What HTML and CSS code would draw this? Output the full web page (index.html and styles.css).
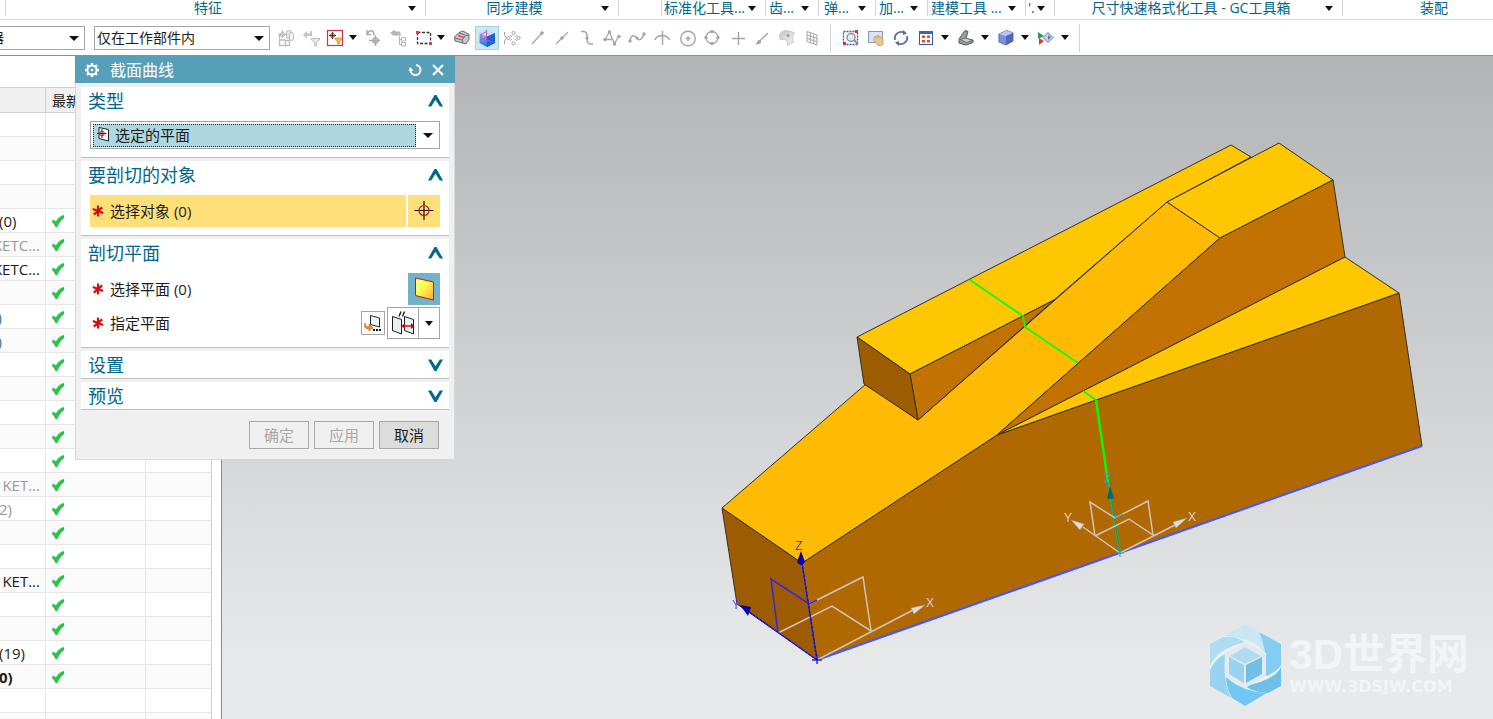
FILE: index.html
```html
<!DOCTYPE html>
<html lang="zh-CN">
<head>
<meta charset="utf-8">
<title>截面曲线</title>
<link rel="stylesheet" href="styles.css">
</head>
<body>
<svg class="defs" aria-hidden="true">
  <defs>
    <symbol id="check" viewBox="0 0 14 14"><path d="M1 7.500 2.800 6.200 5 8.200C6.600 5 9 2.500 12.600 1.400V4C9.600 6 7.600 9 6 12.800H4.800C4 10.500 2.800 9 1 7.500Z" fill="#14d636" stroke="#159a2c" stroke-width=".7"/></symbol>
    <symbol id="star" viewBox="0 0 12 12"><path d="M6 .5V11.500M.8 4 11.200 8M1.800 9.600 10.200 2.400" stroke="#dc0a0a" stroke-width="2.200" fill="none"/></symbol>
    <symbol id="chev" viewBox="0 0 15 12"><path d="M0 11.500 6.500 0H8.500L15 11.500H11.800L7.500 4.800 3.200 11.500Z" fill="#00688b"/></symbol>
    <linearGradient id="gold" x2="1" y2="1"><stop offset="0" stop-color="#ffffa0"/><stop offset=".4" stop-color="#ffff50"/><stop offset="1" stop-color="#ffa63c"/></linearGradient>
    <linearGradient id="blue" x2="0" y2="1"><stop offset="0" stop-color="#a8d4ff"/><stop offset="1" stop-color="#1c6cf0"/></linearGradient>
    <linearGradient id="grey" x2="1" y2="1"><stop offset="0" stop-color="#c4c4c4"/><stop offset="1" stop-color="#f4f4f4"/></linearGradient>
  </defs>
</svg>

<nav class="ribbon">
  <button class="group g-edge"></button>
  <button class="group g-feature"><span>特征</span><i class="arrow"></i></button>
  <button class="group g-sync"><span>同步建模</span><i class="arrow"></i></button>
  <button class="group g-blank"></button>
  <button class="group g-std"><span>标准化工具...</span><i class="arrow"></i></button>
  <button class="group g-gear"><span>齿...</span><i class="arrow"></i></button>
  <button class="group g-spring"><span>弹...</span><i class="arrow"></i></button>
  <button class="group g-add"><span>加...</span><i class="arrow"></i></button>
  <button class="group g-model"><span>建模工具 ...</span><i class="arrow"></i></button>
  <button class="group g-tiny"><span>'.</span><i class="arrow"></i></button>
  <button class="group g-dim"><span>尺寸快速格式化工具 - GC工具箱</span><i class="arrow"></i></button>
  <button class="group g-asm"><span>装配</span></button>
</nav>

<div class="toolbar">
  <div class="pick pick-filter"><select aria-label="选择过滤器"><option>选择过滤器</option></select></div>
  <div class="pick pick-scope"><select aria-label="选择范围"><option>仅在工作部件内</option></select></div>
  <div class="tools">
    <button class="tool" aria-label="装配约束"><svg viewBox="0 0 22 22" fill="none" stroke="#bdbdbd"><path d="M4.500 7.500v11h6v-5M4.500 13h6M10.500 18.500h4v-5h-4M3 7.500h9M7.500 3v8" stroke-width="1.300"/><circle cx="7.500" cy="7.500" r="2.200"/><rect x="11.500" y="3.500" width="5" height="8" rx="2" fill="#e4e4e4"/><rect x="14.500" y="5.500" width="4" height="8" rx="2" fill="#f2f2f2"/></svg></button>
    <button class="tool" aria-label="重置过滤"><svg viewBox="0 0 22 22" fill="#c4c4c4"><path d="M3 8 7 4v2.500h3V4h2v5H7v2.500Z"/><path d="M11.500 11.500h8v1.500l-3 2V19h-2v-4l-3-2Z" stroke="#bbb" fill="#e8e8e8"/></svg></button>
    <span class="split"><button class="tool" aria-label="常规选择过滤器"><svg viewBox="0 0 22 22" fill="none"><rect x="2.500" y="3.500" width="15" height="15" stroke="#cc3344" stroke-width="1.200"/><path d="M4 8.500h7M7.500 5v7" stroke="#333"/><circle cx="7.500" cy="8.500" r="2" stroke="#a33"/><path d="M10 11h6.500v1.500l-2 2V17h-2v-2.500l-2.500-2Z" fill="#f8b83c" stroke="#c98518" stroke-width=".6"/></svg></button><i class="arrow"></i></span>
    <button class="tool" aria-label="恢复点"><svg viewBox="0 0 22 22" fill="none" stroke="#a9a9a9" stroke-width="1.400"><path d="M4 7C7 2 11 3 11 8M4 3V7.500H8M6 13.500h11M12.500 8v11"/><circle cx="12.500" cy="13.500" r="2.500"/></svg></button>
    <button class="tool" aria-label="恢复树"><svg viewBox="0 0 22 22" fill="#b5b5b5"><path d="M2 6 6 3l2 1.500h4l1 4H5Z"/><path d="M11.500 9v8.500M11.500 12.500h2M11.500 17.500h2M13.500 10.500h4v3.500h-4zM13.500 15.500h4v3.500h-4z" fill="none" stroke="#b5b5b5"/></svg></button>
    <span class="split"><button class="tool" aria-label="矩形选择"><svg viewBox="0 0 22 22" fill="none"><rect x="4.500" y="5.500" width="13" height="11" stroke="#333" stroke-width="1.300" stroke-dasharray="3 1.500"/><path d="M3 4h3v3H3zM16 15h3v3h-3z" fill="#e03c3c"/></svg></button><i class="arrow"></i></span>
    <button class="tool" aria-label="高亮面"><svg viewBox="0 0 22 22"><path d="M3.500 10 8 5.500 12 4l6 3.500v5l-3 4.500-3-1-8-2Z" fill="#c6cace" stroke="#666a70"/><path d="M4 11l7 2 4-5 3 .5M11 13l1 3.500M8 6l6 2" fill="none" stroke="#666a70"/><path d="M7 8.500l6 2" stroke="#e44" stroke-width="1.400"/></svg></button>
    <button class="tool on" aria-label="着色"><svg viewBox="0 0 22 22"><path d="M3.500 6 11 2.500 19 6v10l-8 4-7.500-4Z" fill="url(#blue)"/><path d="M3.500 6l7.500 3.500L19 6l-8-3.500Z" fill="#c4e2ff"/><path d="M11 9.500 19 6v10l-8 4Z" fill="#1f62d4"/><path d="M10.500 3v10l6 2M10.500 4.500 5 7.500v5l5.500-2" fill="none" stroke="#d8489a" stroke-width=".9"/></svg></button>
    <button class="tool" aria-label="捕捉点"><svg viewBox="0 0 22 22" fill="none" stroke="#a5a5a5"><path d="M3.500 5v3M3.500 14v3M3.500 8l2 3-2 3"/><circle cx="7.500" cy="11" r="1.600"/><circle cx="17.500" cy="11" r="1.600"/><circle cx="12.500" cy="6" r="1.600"/><circle cx="12.500" cy="16.500" r="1.600"/><path d="M9 8l2 2M16 8l-2 2M9 14l2-2M16 14l-2-2"/></svg></button>
    <button class="tool" aria-label="端点"><svg viewBox="0 0 22 22" stroke="#a5a5a5"><path d="M6 17 16 6" stroke-width="1.300"/><circle cx="16" cy="6" r="1.300" fill="#a5a5a5"/></svg></button>
    <button class="tool" aria-label="中点"><svg viewBox="0 0 22 22" stroke="#a5a5a5"><path d="M5 17 17 5" stroke-width="1.300"/><circle cx="11" cy="11" r="1.300" fill="#a5a5a5"/></svg></button>
    <button class="tool" aria-label="控制点"><svg viewBox="0 0 22 22" fill="none" stroke="#a5a5a5"><path d="M5 4.500h2c4 0 4 2 4 6s0 6.500 4 6.500h2" stroke-width="1.500"/><circle cx="11" cy="11" r="1.200" fill="#a5a5a5"/></svg></button>
    <button class="tool" aria-label="极点"><svg viewBox="0 0 22 22" fill="none" stroke="#a5a5a5" stroke-width="1.300"><path d="M4 12.500 8.500 5l5 12 4-8M4 12.500h7"/><g fill="#a5a5a5" stroke="none"><circle cx="4" cy="12.500" r="1.700"/><circle cx="8.500" cy="5" r="1.700"/><circle cx="13.500" cy="17" r="1.700"/><circle cx="18" cy="9.500" r="1.700"/></g></svg></button>
    <button class="tool" aria-label="样条点"><svg viewBox="0 0 22 22" fill="none" stroke="#a5a5a5" stroke-width="1.500"><path d="M4 14c1-7 5-6 7-3s5 2 7-4"/><g fill="#a5a5a5" stroke="none"><circle cx="4" cy="14" r="1.700"/><circle cx="11" cy="11" r="1.500"/><circle cx="18" cy="7" r="1.700"/></g></svg></button>
    <button class="tool" aria-label="交点"><svg viewBox="0 0 22 22" fill="none" stroke="#a5a5a5" stroke-width="1.500"><path d="M4 13c2-6 12-6 14.500 0M11.500 4v14"/></svg></button>
    <button class="tool" aria-label="圆心"><svg viewBox="0 0 22 22" fill="none" stroke="#a5a5a5" stroke-width="1.400"><circle cx="12" cy="11.500" r="7.300"/><path d="M9.500 11.500h5M12 9v5"/></svg></button>
    <button class="tool" aria-label="象限点"><svg viewBox="0 0 22 22" fill="none" stroke="#a5a5a5" stroke-width="1.300"><circle cx="11" cy="10.500" r="6"/><g fill="#a5a5a5" stroke="none"><circle cx="11" cy="4.500" r="1.700"/><circle cx="11" cy="16.500" r="1.700"/><circle cx="5" cy="10.500" r="1.700"/><circle cx="17" cy="10.500" r="1.700"/></g></svg></button>
    <button class="tool" aria-label="现有点"><svg viewBox="0 0 22 22" stroke="#a5a5a5" stroke-width="1.400"><path d="M6 11.500h13M12.500 5v13"/></svg></button>
    <button class="tool" aria-label="曲线上的点"><svg viewBox="0 0 22 22" stroke="#a5a5a5"><path d="M5 17.500 17 6" stroke-width="1.300"/><circle cx="8" cy="15" r="1.500" fill="#a5a5a5"/></svg></button>
    <button class="tool" aria-label="面上的点"><svg viewBox="0 0 22 22"><path d="M3.500 8c2-5 8-5.500 15-2-3 3-2 6-1 9l-6 3c1-5-4-7-7-5Z" fill="url(#grey)" stroke="#c6c6c6"/><circle cx="12" cy="8.500" r="1.500" fill="#999"/></svg></button>
    <button class="tool" aria-label="有界栅格"><svg viewBox="0 0 22 22" fill="none" stroke="#a5a5a5"><path d="M6 4.500 16 8v10L6 14.500ZM9.500 5.500v10M12.800 7v10M6 8l10 3.500M6 11.300l10 3.500"/></svg></button>
  </div>
  <div class="tools view-tools">
    <button class="tool" aria-label="适合窗口"><svg viewBox="0 0 22 22" fill="none"><path d="M3.500 4.500h14v13h-14z" stroke="#3554c8" stroke-width="1.300" stroke-dasharray="2 1"/><circle cx="11" cy="10.500" r="4" fill="#e4edf6" stroke="#8a9098" stroke-width="1.500"/><path d="m14 13 4 4" stroke="#a08878" stroke-width="2"/><path d="M3 15h3v3H3zM15 3h3v3h-3z" fill="#e03030"/></svg></button>
    <button class="tool" aria-label="平移"><svg viewBox="0 0 22 22"><rect x="3.500" y="4.500" width="14" height="11" fill="#dbe4f5" stroke="#8399b5"/><path d="M9 10l2-.5 1 1.500V8.500h2V11l1-1.500 1.500 1L18 12.500v5l-2 1h-3l-4-5Z" fill="#ecc593" stroke="#b98950" stroke-width=".6"/></svg></button>
    <button class="tool" aria-label="旋转"><svg viewBox="0 0 22 22" fill="none" stroke="#586a9e" stroke-width="1.800"><path d="M5 13A6.500 6.500 0 0 1 14 5.500M17 9A6.500 6.500 0 0 1 8 16.500"/><path d="M13 3l4 3.500-4 1.500ZM9 19l-4-3.500 4-1.500Z" fill="#586a9e" stroke="none"/></svg></button>
    <span class="split"><button class="tool" aria-label="视图布局"><svg viewBox="0 0 22 22"><rect x="4.500" y="4.500" width="13" height="13" fill="#fff" stroke="#3d55a8"/><path d="M4 4h14v3H4z" fill="#3d62bd"/><path d="M7 8.500h3V11H7zM12 8.500h3V11h-3zM7 13h3v2.500H7zM12 13h3v2.500h-3z" fill="#e24a36"/></svg></button><i class="arrow"></i></span>
    <span class="split"><button class="tool" aria-label="渲染样式"><svg viewBox="0 0 22 22"><path d="M4 12 10 3.500l3 1-2 7 7 1.500v2.500l-7 2.500-7-2Z" fill="#9a9c9e" stroke="#55585a"/><path d="M5 12.500l6-1.500 6.500 2.500-6 2Z" fill="#c9cbcc" stroke="#55585a" stroke-width=".7"/></svg></button><i class="arrow"></i></span>
    <span class="split"><button class="tool" aria-label="定向视图"><svg viewBox="0 0 22 22"><path d="M4 7l8-3.500 6 2.500v8l-7 4-7-3Z" fill="#7d92dc" stroke="#5265b0"/><path d="M4 7l8-3.500 6 2.500-7 3Z" fill="#b9c7f4"/><path d="M11 9l7-3v8l-7 4Z" fill="#5268bd"/></svg></button><i class="arrow"></i></span>
    <span class="split"><button class="tool" aria-label="编辑截面"><svg viewBox="0 0 22 22"><path d="M3 5l6 4-6 3Z" fill="#2a9e50"/><path d="M4 11l5 3-5 4Z" fill="#e03838"/><path d="M8 10.500l5-5 5 5-5 5Z" fill="#c9d3e8" stroke="#6177a8"/><path d="M13 8l3 2.500-3 2.500Z" fill="#607ab0"/></svg></button><i class="arrow"></i></span>
  </div>
</div>

<main class="work">
  <aside class="navigator">
    <table class="tree">
      <colgroup><col class="c-name"><col class="c-state"><col class="c-note"></colgroup>
      <thead><tr><th></th><th>最新</th><th></th></tr></thead>
      <tbody>
        <tr><td></td><td></td><td></td></tr>
        <tr><td></td><td></td><td></td></tr>
        <tr><td></td><td></td><td></td></tr>
        <tr><td></td><td></td><td></td></tr>
        <tr><td><div>(0)</div></td><td><svg><use href="#check"/></svg></td><td></td></tr>
        <tr class="dim"><td><div class="end">KETC...</div></td><td><svg><use href="#check"/></svg></td><td></td></tr>
        <tr><td><div class="end">KETC...</div></td><td><svg><use href="#check"/></svg></td><td></td></tr>
        <tr><td></td><td><svg><use href="#check"/></svg></td><td></td></tr>
        <tr><td><div class="tail">)</div></td><td><svg><use href="#check"/></svg></td><td></td></tr>
        <tr><td><div class="tail">)</div></td><td><svg><use href="#check"/></svg></td><td></td></tr>
        <tr><td></td><td><svg><use href="#check"/></svg></td><td></td></tr>
        <tr><td></td><td><svg><use href="#check"/></svg></td><td></td></tr>
        <tr><td></td><td><svg><use href="#check"/></svg></td><td></td></tr>
        <tr><td></td><td><svg><use href="#check"/></svg></td><td></td></tr>
        <tr><td></td><td><svg><use href="#check"/></svg></td><td></td></tr>
        <tr class="dim"><td><div class="end">KET...</div></td><td><svg><use href="#check"/></svg></td><td></td></tr>
        <tr class="dim"><td><div>2)</div></td><td><svg><use href="#check"/></svg></td><td></td></tr>
        <tr><td></td><td><svg><use href="#check"/></svg></td><td></td></tr>
        <tr><td></td><td><svg><use href="#check"/></svg></td><td></td></tr>
        <tr><td><div class="end">KET...</div></td><td><svg><use href="#check"/></svg></td><td></td></tr>
        <tr><td></td><td><svg><use href="#check"/></svg></td><td></td></tr>
        <tr><td></td><td><svg><use href="#check"/></svg></td><td></td></tr>
        <tr><td><div>(19)</div></td><td><svg><use href="#check"/></svg></td><td></td></tr>
        <tr class="strong"><td><div>0)</div></td><td><svg><use href="#check"/></svg></td><td></td></tr>
        <tr><td></td><td></td><td></td></tr>
        <tr><td></td><td></td><td></td></tr>
      </tbody>
    </table>
  </aside>

  <section class="canvas">
    <svg class="scene" viewBox="222 56 1271 663" preserveAspectRatio="xMinYMin meet">
      <g stroke="#33302a" stroke-linejoin="round">
        <path d="M802 563 997 435 1096 400 1399 293 1422 446 817 660Z" fill="#b06800"/>
        <path d="M722 508 802 563 817 660 737 604Z" fill="#9d5c00"/>
        <path d="M722 508 866 384 918 420 1167 202 1220 238 997 435 802 563Z" fill="#ffbb04"/>
        <path d="M857 337 1231 145 1251 157 1167 202 1054 300 910 374Z" fill="#ffc602"/>
        <path d="M910 374 1054 300 918 420Z" fill="#c17200"/>
        <path d="M857 337 910 374 918 420 864 384Z" fill="#9d5c00"/>
        <path d="M1167 202 1279 143 1333 180 1220 238Z" fill="#ffc602"/>
        <path d="M1220 238 1333 180 1345 257 997 435Z" fill="#c17200"/>
        <path d="M997 435 1345 257 1399 293 1096 400Z" fill="#ffc602"/>
      </g>
      <g fill="none">
        <path d="M817 660 1422 446" stroke="#4557f5" stroke-width="2"/>
        <path d="M970 280 1023 316 1025 327 1078 363M1083 391 1096 400" stroke="#0f0" stroke-width="1.800"/>
        <path d="M1096 400 1108 482" stroke="#0f0" stroke-width="2.400"/>
        <path d="M1108 482 1120 553" stroke="#35b050" stroke-width="2.400"/>
        <path d="M1111 496 1120 553" stroke="#109080"/>
        <g stroke="#cfc4bd" stroke-width="1.500">
          <path d="M817 660 915 609M778 633 832 606 871 631 863 577 809 604"/>
          <path d="M1120 553 1083 527M1120 553 1175 525M1095 536 1090 502 1115 518 1148 501 1153 535 1129 519 1095 536"/>
        </g>
        <path d="M817 660 802 563M817 660 748 611M778 633 771 579 809 604 817 600M812 660h10M817 655v9" stroke="#3524e8" stroke-width="1.500"/>
        <path d="M817 660 802 563M817 660 748 611" stroke="#0000b4" stroke-dasharray="2 2"/>
        <path d="M1115 518 1123 514M1115 553h9M1120 548v9" stroke="#3c9b98"/>
      </g>
      <path d="M801 551 797 562Q801 568 805 562ZM740 605 751 607 748 616Z" fill="#0000b0"/>
      <path d="M1110 486 1107 498Q1110 500 1114 498Z" fill="#006a68"/>
      <path d="M925 605 911 608 914 614ZM1187 518 1173 522 1176 528ZM1071 520 1080 530 1084 524Z" fill="#ddd" stroke="#999" stroke-width=".5"/>
      <g class="axis">
        <text x="795" y="550" fill="#4a3cff">Z</text>
        <text x="732" y="609" fill="#6656e8">Y</text>
        <text x="926" y="607" fill="#d8d4d2">X</text>
        <text x="1104" y="483" fill="#3c9b98">Z</text>
        <text x="1064" y="522" fill="#d8d4d2">Y</text>
        <text x="1188" y="521" fill="#d8d4d2">X</text>
      </g>
    </svg>
    <div class="watermark">
      <svg viewBox="0 0 72 82">
        <path d="M36 0 72 20V62L36 82 1 62V20Z" fill="#e9f2f7"/>
        <path d="M36 0 49 7Q55 16 55 28 45 14 15 12Z" fill="#cbe6f4"/>
        <path d="M50 8 72 20V41Q68 48 57 52 58 25 50 8Z" fill="#82cdf0"/>
        <path d="M72 43V62L59 69Q46 69 36 62 66 56 72 43Z" fill="#6fbfe8"/>
        <path d="M58 69 36 82 23 74Q17 64 17 53 34 68 58 69Z" fill="#70c8f2"/>
        <path d="M22 74 1 62V46Q6 35 16 30 14 59 22 74Z" fill="#98d3f0"/>
        <path d="M1 42V20L14 13Q27 12 36 18 8 25 1 42Z" fill="#b0dcf2"/>
        <path d="M36 18 57 29V52L36 64 16 52V29Z" fill="#e6eaed"/>
        <path d="M36 23 52 32 36 40 21 32Z" fill="#b0dcf2"/>
        <path d="M20 33 35 41V59L20 50Z" fill="#98d3f0"/>
        <path d="M53 33 37 41V59L53 50Z" fill="#6fbfe8"/>
      </svg>
      <div class="brand"><strong>3D世界网</strong><span>WWW.3DSJW.COM</span></div>
    </div>
  </section>

  <form class="dialog" onsubmit="return false">
    <header class="titlebar">
      <svg viewBox="0 0 16 16" fill="none" stroke="#fff"><circle cx="8" cy="8" r="4.600" stroke-width="2"/><path d="M8 1v2M8 13v2M1 8h2M13 8h2M3 3l1.500 1.500M11.500 11.500 13 13M13 3l-1.500 1.500M4.500 11.500 3 13" stroke-width="2.400"/><circle cx="8" cy="8" r="1.300" fill="#fff" stroke="none"/></svg>
      <h1>截面曲线</h1>
      <button type="button" aria-label="重置"><svg viewBox="0 0 16 16" fill="none" stroke="#fff" stroke-width="2"><path d="M9 3A5 5 0 1 1 3.500 8"/><path d="M1.500 9 3 5 6.500 8.500Z" fill="#fff" stroke="none"/></svg></button>
      <button type="button" aria-label="关闭"><svg viewBox="0 0 16 16" stroke="#fff" stroke-width="2"><path d="M3 3 13 13M13 3 3 13"/></svg></button>
    </header>
    <section class="panel">
      <h2>类型<svg><use href="#chev"/></svg></h2>
      <div class="body">
        <div class="combo">
          <svg viewBox="0 0 16 16" fill="none"><path d="M4 1.500 13.500 3.500V15L4 12.500Z" fill="#f4faf8" stroke="#222"/><path d="M2 7.500h9.500M7 3v9" stroke="#222"/><circle cx="7" cy="7.500" r="2.300" stroke="#c22"/></svg>
          <select aria-label="类型"><option>选定的平面</option></select>
          <i class="arrow"></i>
        </div>
      </div>
    </section>
    <section class="panel">
      <h2>要剖切的对象<svg><use href="#chev"/></svg></h2>
      <div class="body">
        <div class="row active">
          <div class="label"><svg><use href="#star"/></svg>选择对象 (0)</div>
          <button type="button" class="square" aria-label="选择对象"><svg viewBox="0 0 24 24" fill="none"><path d="M2.500 11.500h19M12 2v19" stroke="#111" stroke-width="1.200"/><circle cx="12" cy="11.500" r="5" stroke="#c91414" stroke-width="1.200"/></svg></button>
        </div>
      </div>
    </section>
    <section class="panel">
      <h2>剖切平面<svg><use href="#chev"/></svg></h2>
      <div class="body">
        <div class="row">
          <div class="label"><svg><use href="#star"/></svg>选择平面 (0)</div>
          <button type="button" class="square pressed" aria-label="选择平面"><svg viewBox="0 0 24 24"><path d="M3.500 1 21.500 5V23L3.500 18.500Z" fill="url(#gold)" stroke="#c81414"/></svg></button>
        </div>
        <div class="row">
          <div class="label"><svg><use href="#star"/></svg>指定平面</div>
          <button type="button" class="small" aria-label="平面对话框"><svg viewBox="0 0 22 22"><path d="M8.500 3.500 17.500 6V15L8.500 12.500Z" fill="#eef6f2" stroke="#222"/><path d="M3 11q0 4 4 4v-3l4 4-4 3v-2q-6 0-4-6Z" fill="#f2902c" stroke="#b85c10" stroke-width=".6"/><path d="M11 17h2v2h-2zM14 17h2v2h-2zM17 17h2v2h-2z" fill="#111"/></svg></button>
          <div class="duo">
            <button type="button" aria-label="自动判断"><svg viewBox="0 0 28 28" fill="none" stroke="#1d1d1d"><path d="M3.500 7.500 12.500 10.500V25L3.500 21.500ZM15.500 7.500 24.500 10.500V25L15.500 21.500Z" fill="#e6f2ec"/><path d="M10 7.500 12 2.500M13.500 7.500 15.500 2.500" stroke-width="1.400"/><path d="M14 17h10" stroke="#c00" stroke-width="1.400"/><path d="M12.500 17l3.500-3v6ZM25.500 17l-3.500-3v6Z" fill="#c00" stroke="none"/></svg></button>
            <button type="button" aria-label="更多平面选项"><i class="arrow"></i></button>
          </div>
        </div>
      </div>
    </section>
    <section class="panel closed"><h2>设置<svg><use href="#chev"/></svg></h2></section>
    <section class="panel closed"><h2>预览<svg><use href="#chev"/></svg></h2></section>
    <footer class="actions">
      <button type="button" disabled>确定</button>
      <button type="button" disabled>应用</button>
      <button type="button" class="cancel">取消</button>
    </footer>
  </form>
</main>
</body>
</html>
```

FILE: styles.css
```css
* { box-sizing: border-box; }

body {
  margin: 0;
  height: 100vh;
  display: flex;
  flex-direction: column;
  overflow: hidden;
  background: #fff;
  color: #1c1c1c;
  font: 15px/20px "Open Sans", "Noto Sans CJK SC", sans-serif;
}

button, select { font: inherit; color: inherit; }
button { padding: 0; border: 0; background: none; }
.defs { position: absolute; width: 0; height: 0; }

.arrow {
  flex: none;
  width: 0;
  height: 0;
  border: 4px solid transparent;
  border-top: 5px solid #111;
  border-bottom: 0;
}

/* Ribbon group captions */
.ribbon {
  flex: none;
  display: flex;
  height: 20px;
  border-bottom: 1px solid #dadada;
}
.group {
  flex: none;
  display: flex;
  align-items: center;
  justify-content: space-between;
  height: 16px;
  padding: 0 9px 0 2px;
  border-right: 1px solid #d4d4d4;
  color: #00658a;
  font-size: 14px;
  line-height: 18px;
  white-space: nowrap;
}
.group span { flex: 1; text-align: left; }
.g-edge { width: 6px; padding: 0; }
.g-feature { width: 420px; }
.g-sync { width: 193px; }
.g-feature span, .g-sync span, .g-dim span { text-align: center; }
.g-blank { width: 43px; }
.g-std { width: 104px; }
.g-gear { width: 53px; padding-left: 3px; }
.g-spring { width: 57px; padding-left: 5px; }
.g-add { width: 52px; padding-left: 3px; }
.g-model { width: 98px; padding-left: 3px; }
.g-tiny { width: 29px; }
.g-dim { width: 288px; }
.g-asm { flex: 1; border: 0; padding: 0; }
.g-asm span { padding-left: 77px; }

/* Selection bar */
.toolbar {
  flex: none;
  display: flex;
  align-items: center;
  height: 36px;
  border-bottom: 1px solid #8a9296;
}
.pick { position: relative; flex: none; height: 24px; }
.pick select {
  appearance: none;
  width: 100%;
  height: 100%;
  padding: 0 24px 0 2px;
  border: 1px solid #a5a5a5;
  border-radius: 0;
  background: #fff;
  font-size: 14px;
}
.pick::after {
  content: "";
  position: absolute;
  right: 6px;
  top: 10px;
  border: 5px solid transparent;
  border-top-color: #111;
  border-bottom: 0;
  pointer-events: none;
}
.pick-filter { width: 154px; margin-left: -69px; }
.pick-scope { width: 176px; margin-left: 9px; }
.tools { display: flex; align-items: center; gap: 3px; padding: 0 7px 0 5px; height: 28px; border-right: 1px solid #d4d4d4; }
.tool { flex: none; width: 22px; height: 22px; }
.tool svg { display: block; width: 100%; height: 100%; }
.tool.on { background: #cce8f0; outline: 1px solid #9fd3e2; }
.split { display: flex; align-items: center; width: 35px; }
.split .arrow { margin-left: 2px; }
.view-tools { padding-left: 9px; padding-right: 7px; }
.view-tools .split { width: 37px; }
.view-tools .split .arrow { margin-left: 4px; }

/* Work area */
.work { position: relative; flex: 1; min-height: 0; display: flex; }
.navigator {
  flex: none;
  width: 222px;
  padding: 31px 9px 0 0;
  border-right: 1px solid #858b8f;
  overflow: hidden;
}
.tree {
  table-layout: fixed;
  width: 100%;
  border-collapse: separate;
  border-spacing: 0;
  border-right: 1px solid #d0d0d0;
}
.c-name { width: 46px; }
.c-state { width: 100px; }
.tree th {
  height: 26px;
  padding: 2px 0 0 6px;
  border: 1px solid #cfcfcf;
  border-left: 0;
  background: #f0f0f0;
  font-weight: 400;
  font-size: 14px;
  text-align: left;
}
.tree td { height: 24px; padding: 0; border: 1px solid #e6e6e6; border-width: 0 1px 1px 0; }
.tree th:last-child, .tree td:last-child { border-right: 0; }
.tree tr:nth-child(even) td { background: #fafafa; }
.tree td div { display: flex; overflow: hidden; height: 22px; margin-left: -1px; line-height: 22px; }
.tree .end { justify-content: flex-end; padding-right: 5px; }
.tree .tail { width: 3px; justify-content: flex-end; color: #4a6fa8; }
.tree td svg { display: block; width: 14px; height: 14px; margin-left: 5px; }
.dim { color: #999; }
.strong { font-weight: 700; }

.canvas {
  position: relative;
  flex: 1;
  min-width: 0;
  background: linear-gradient(#b3b4b5, #d7d8d9 62%, #e8e9ea 92%);
  overflow: hidden;
}
.scene { display: block; width: 100%; height: 100%; }
.axis { font: 12px "Liberation Sans", sans-serif; }
.watermark { position: absolute; right: 24px; bottom: 13px; display: flex; align-items: center; gap: 8px; color: #f3f4f7; }
.watermark svg { width: 72px; height: 82px; }
.brand { display: flex; flex-direction: column; }
.brand strong { font: 700 42px/44px "Liberation Sans", "Noto Sans CJK SC", sans-serif; }
.brand span { font: 700 16px/20px "DejaVu Sans", sans-serif; }

/* Dialog */
.dialog {
  position: absolute;
  left: 75px;
  top: 0;
  width: 380px;
  display: flex;
  flex-direction: column;
  gap: 3px;
  padding: 0 5px;
  border: 1px solid #d8d8d8;
  border-top: 0;
  background: #f0f0f0;
}
.titlebar {
  display: flex;
  align-items: center;
  height: 27px;
  margin: 0 -6px 1px;
  padding: 0 9px;
  background: #559fb8;
  color: #fff;
}
.titlebar svg { display: block; width: 16px; height: 16px; }
.titlebar button { margin-left: 7px; }
.titlebar h1 { flex: 1; margin: 0 0 0 10px; font-size: 16px; font-weight: 400; line-height: 24px; }
.panel { background: #fff; border-bottom: 1px solid #c0c0c0; }
.panel h2 {
  display: flex;
  align-items: center;
  justify-content: space-between;
  height: 28px;
  margin: 0;
  padding: 0 6px 0 7px;
  color: #00658a;
  font-size: 18px;
  font-weight: 400;
  line-height: 28px;
}
.panel h2 svg { width: 15px; height: 12px; }
.closed h2 { height: 27px; }
.closed h2 svg { transform: rotate(180deg); }
.body { display: flex; flex-direction: column; gap: 2px; padding: 6px 9px 8px; }
.combo { position: relative; display: flex; align-items: center; height: 28px; padding: 2px; border: 1px solid #a5a5a5; }
.combo svg { position: absolute; left: 4px; top: 4px; width: 16px; height: 16px; }
.combo select {
  appearance: none;
  flex: 1;
  height: 23px;
  padding: 0 0 0 21px;
  border: 1px dotted #222;
  border-radius: 0;
  background: #aed7e1;
  line-height: 20px;
}
.combo .arrow { margin: 0 4px 0 7px; border-width: 5px 5px 0; }
.row { display: flex; align-items: center; gap: 2px; height: 32px; }
.label { flex: 1; display: flex; align-items: center; gap: 6px; height: 32px; padding-left: 2px; }
.label svg { width: 12px; height: 12px; }
.active > * { background: #ffe078; }
.square { display: grid; place-items: center; width: 32px; height: 32px; }
.square svg { width: 24px; height: 24px; }
.pressed { background: #72b3ca; }
.small { width: 24px; height: 24px; border: 1px solid #a5a5a5; background: #fff; }
.small svg { display: block; width: 22px; height: 22px; }
.duo { display: flex; width: 53px; height: 32px; border: 1px solid #a5a5a5; }
.duo button { flex: 1; display: grid; place-items: center; }
.duo button:first-child { flex: none; width: 31px; border-right: 1px solid #a5a5a5; }
.duo svg { width: 28px; height: 28px; }
.actions { display: flex; justify-content: flex-end; gap: 5px; padding: 8px 10px 10px; }
.actions button { width: 60px; height: 28px; border: 1px solid #a8a8a8; background: #f0f0f0; color: #a8a8a8; }
.actions .cancel { background: #dcdcdc; color: #1c1c1c; }
```
